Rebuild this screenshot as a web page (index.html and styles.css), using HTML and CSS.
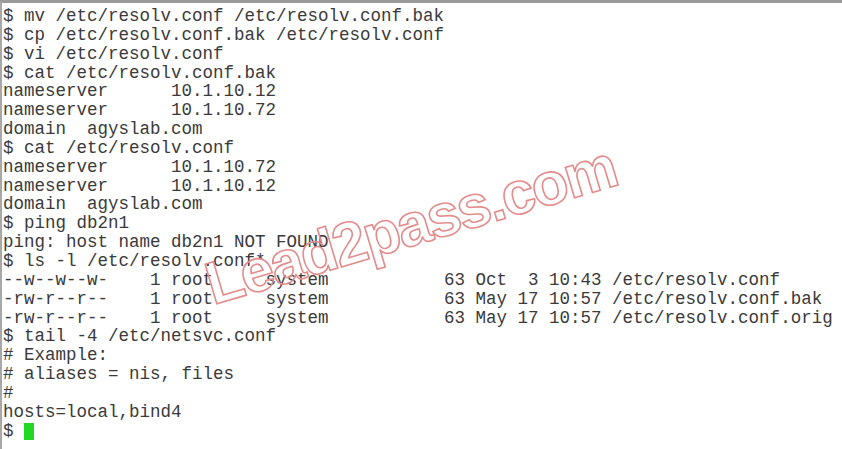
FILE: index.html
```html
<!DOCTYPE html>
<html>
<head>
<meta charset="utf-8">
<link rel="stylesheet" href="styles.css">
</head>
<body>
<div class="term">
<pre class="screen">$ mv /etc/resolv.conf /etc/resolv.conf.bak
$ cp /etc/resolv.conf.bak /etc/resolv.conf
$ vi /etc/resolv.conf
$ cat /etc/resolv.conf.bak
nameserver      10.1.10.12
nameserver      10.1.10.72
domain  agyslab.com
$ cat /etc/resolv.conf
nameserver      10.1.10.72
nameserver      10.1.10.12
domain  agyslab.com
$ ping db2n1
ping: host name db2n1 NOT FOUND
$ ls -l /etc/resolv.conf*
--w--w--w-    1 root     system           63 Oct  3 10:43 /etc/resolv.conf
-rw-r--r--    1 root     system           63 May 17 10:57 /etc/resolv.conf.bak
-rw-r--r--    1 root     system           63 May 17 10:57 /etc/resolv.conf.orig
$ tail -4 /etc/netsvc.conf
# Example:
# aliases = nis, files
#
hosts=local,bind4
$ <span class="cursor"> </span></pre>
<svg class="watermark" width="842" height="449" viewBox="0 0 842 449" aria-hidden="true">
<text x="213" y="305" transform="rotate(-16.5 213 305)" class="wm-text">Lead2pass.com</text>
</svg>
</div>
</body>
</html>
```

FILE: styles.css
```css
html, body {
  margin: 0;
  padding: 0;
  background: #ffffff;
}

.term {
  position: relative;
  width: 842px;
  height: 449px;
  box-sizing: border-box;
  border-top: 3px solid #9a9a9a;
  border-left: 2px solid #a8a8a8;
  background: #ffffff;
  overflow: hidden;
}

.screen {
  margin: 0;
  padding: 4px 0 0 1px;
  font-family: "Liberation Mono", "Courier New", monospace;
  font-size: 17.5px;
  line-height: 18.85px;
  color: #3a3a3a;
  white-space: pre;
}

.cursor {
  display: inline-block;
  width: 10px;
  height: 17px;
  vertical-align: -1px;
  background: #22d822;
}

.watermark {
  position: absolute;
  left: -2px;
  top: -3px;
  pointer-events: none;
}

.wm-text {
  font-family: "Liberation Sans", Arial, sans-serif;
  font-weight: 700;
  font-size: 60px;
  letter-spacing: -2px;
  fill: none;
  stroke: #e48c8c;
  stroke-width: 1.6px;
}
```
